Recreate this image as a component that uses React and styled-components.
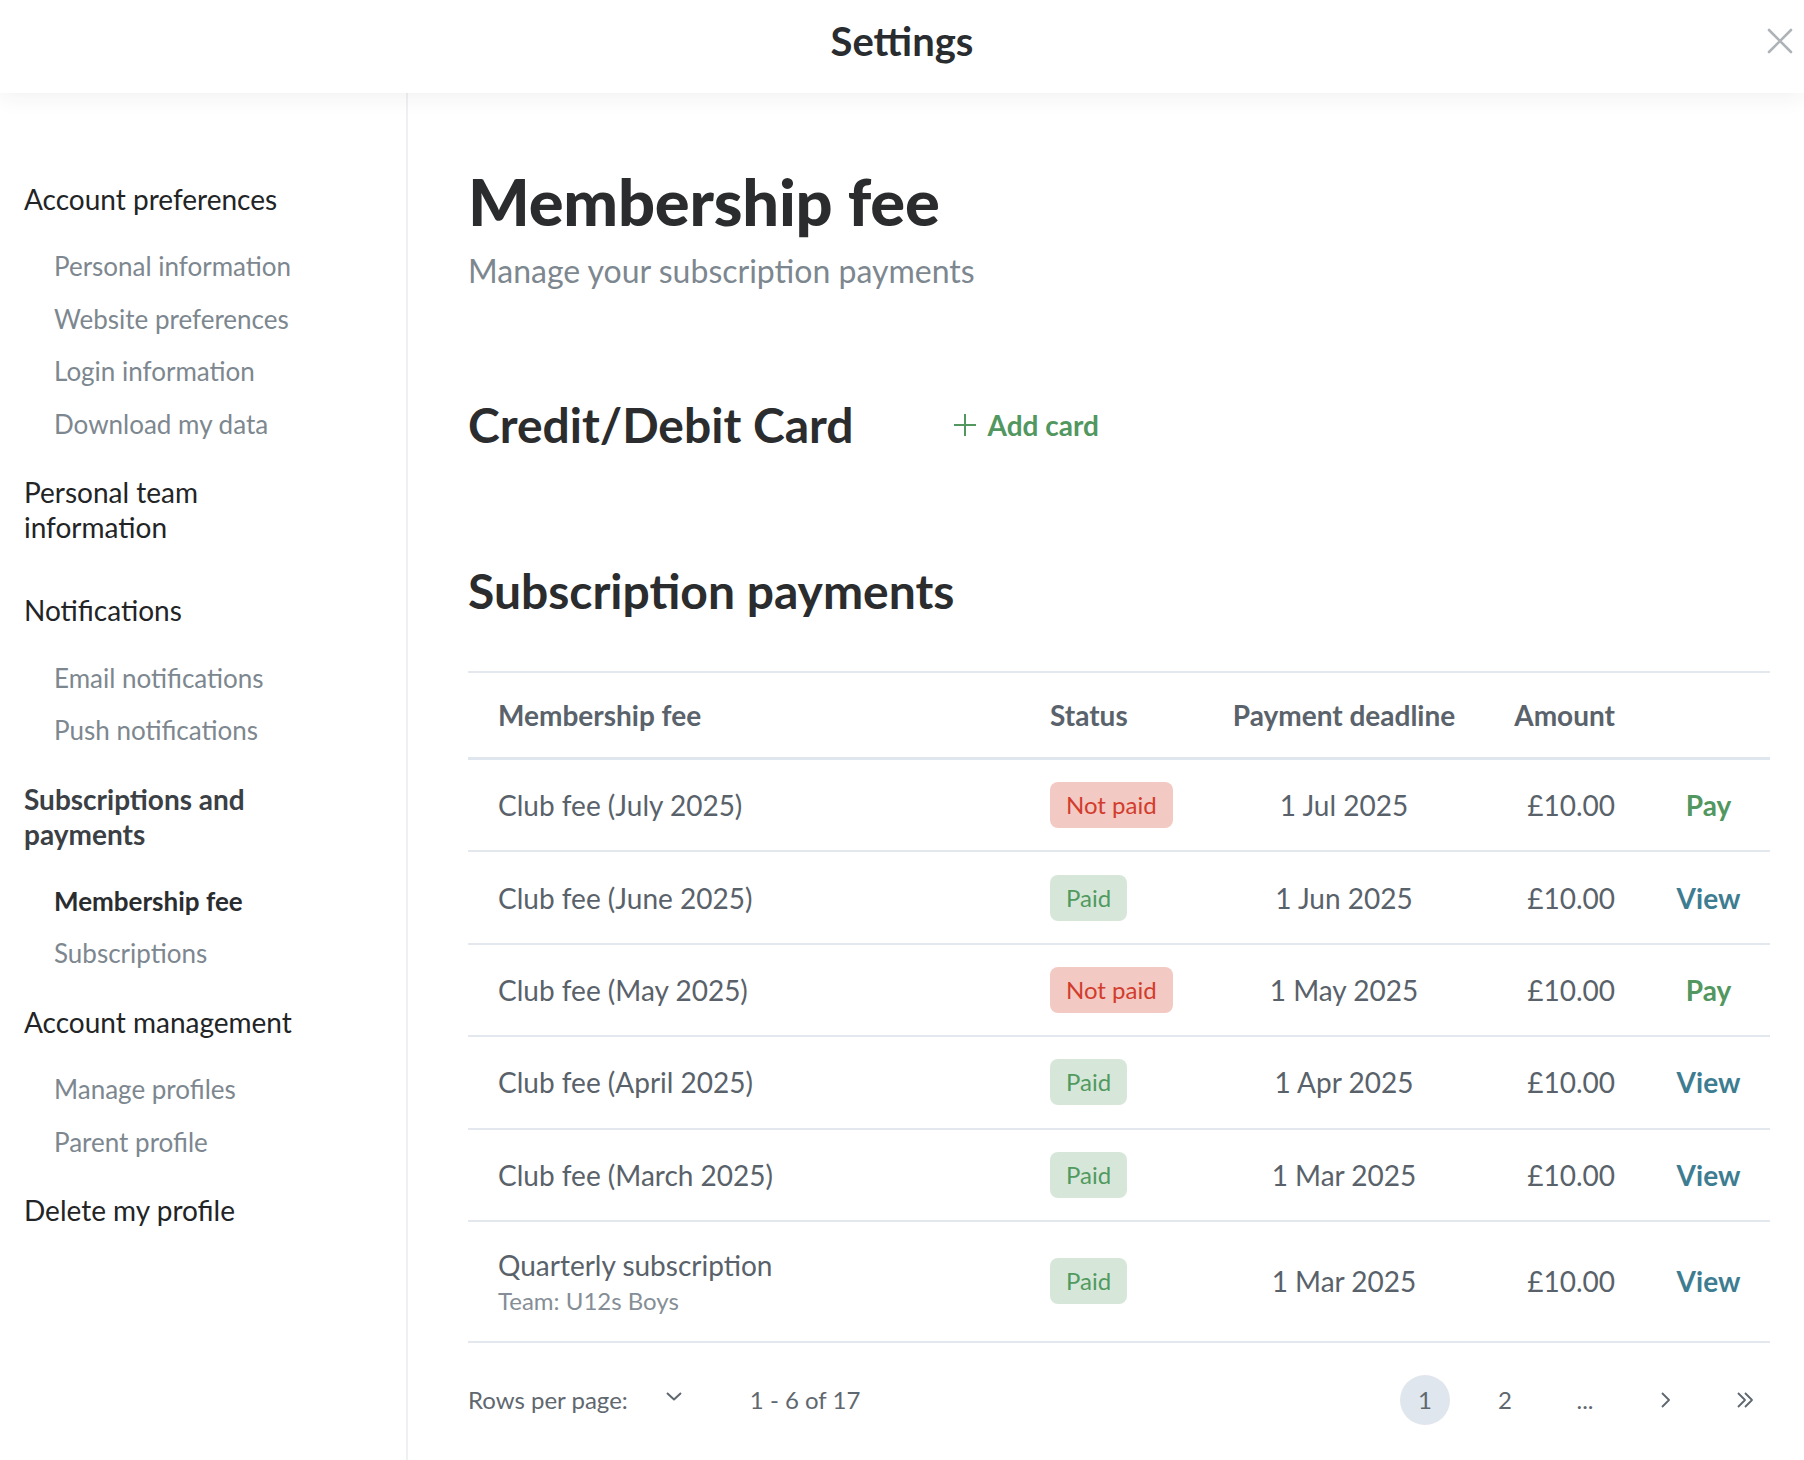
import styled, { createGlobalStyle } from "styled-components";

const GlobalStyle = createGlobalStyle`
    html, body {
        margin: 0;
        padding: 0;
        background: #fff;
    }
    body {
        font-family: 'Lato', 'Noto Sans', sans-serif;
        color: #2a2d30;
    }
    * {
        box-sizing: border-box;
    }
`

const sidebar = [
    {title: "Account preferences", items: [
        {label: "Personal information"},
        {label: "Website preferences"},
        {label: "Login information"},
        {label: "Download my data"},
    ]},
    {title: "Personal team information", items: []},
    {title: "Notifications", items: [
        {label: "Email notifications"},
        {label: "Push notifications"},
    ]},
    {title: "Subscriptions and payments", bold: true, items: [
        {label: "Membership fee", active: true},
        {label: "Subscriptions"},
    ]},
    {title: "Account management", items: [
        {label: "Manage profiles"},
        {label: "Parent profile"},
    ]},
    {title: "Delete my profile", items: []},
]

const payments = [
    {name: "Club fee (July 2025)", paid: false, deadline: "1 Jul 2025", amount: "£10.00"},
    {name: "Club fee (June 2025)", paid: true, deadline: "1 Jun 2025", amount: "£10.00"},
    {name: "Club fee (May 2025)", paid: false, deadline: "1 May 2025", amount: "£10.00"},
    {name: "Club fee (April 2025)", paid: true, deadline: "1 Apr 2025", amount: "£10.00"},
    {name: "Club fee (March 2025)", paid: true, deadline: "1 Mar 2025", amount: "£10.00"},
    {name: "Quarterly subscription", team: "Team: U12s Boys", paid: true, deadline: "1 Mar 2025", amount: "£10.00"},
]

function CloseIcon(){
    return(
        <svg width="26" height="26" viewBox="0 0 26 26" fill="none" stroke="#aeb3b8" strokeWidth="2.6" strokeLinecap="round">
            <path d="M2 2 L24 24 M24 2 L2 24"/>
        </svg>
    )
}

function PlusIcon(){
    return(
        <svg width="22" height="22" viewBox="0 0 22 22" fill="none" stroke="#52975f" strokeWidth="2">
            <path d="M11 0 V22 M0 11 H22"/>
        </svg>
    )
}

function Chevron({dir, double}){
    if (dir === "down") {
        return(
            <svg width="16" height="9" viewBox="0 0 16 9" fill="none" stroke="#5f676f" strokeWidth="2" strokeLinejoin="round">
                <path d="M1 1 L8 7.5 L15 1"/>
            </svg>
        )
    }
    if (double) {
        return(
            <svg width="18" height="18" viewBox="0 0 18 18" fill="none" stroke="#5f676f" strokeWidth="1.8" strokeLinejoin="round">
                <path d="M2 2 L9 9 L2 16 M9 2 L16 9 L9 16"/>
            </svg>
        )
    }
    return(
        <svg width="10" height="18" viewBox="0 0 10 18" fill="none" stroke="#5f676f" strokeWidth="1.8" strokeLinejoin="round">
            <path d="M2 2 L9 9 L2 16"/>
        </svg>
    )
}

export default function App(){
    return(
        <>
            <GlobalStyle/>
            <Page>
                <Header>
                    <HeaderTitle>Settings</HeaderTitle>
                    <CloseButton><CloseIcon/></CloseButton>
                </Header>
                <Body>
                    <Sidebar>
                        {sidebar.map((section) => (
                            <Section key={section.title}>
                                <SectionTitle $bold={section.bold}>{section.title}</SectionTitle>
                                {section.items.length > 0 && (
                                    <SubList>
                                        {section.items.map((item) => (
                                            <SubItem key={item.label} $active={item.active}>{item.label}</SubItem>
                                        ))}
                                    </SubList>
                                )}
                            </Section>
                        ))}
                    </Sidebar>
                    <Main>
                        <PageTitle>Membership fee</PageTitle>
                        <Subtitle>Manage your subscription payments</Subtitle>

                        <CardRow>
                            <SectionHeading>Credit/Debit Card</SectionHeading>
                            <AddCard><PlusIcon/>Add card</AddCard>
                        </CardRow>

                        <SectionHeading $spaced>Subscription payments</SectionHeading>

                        <Table>
                            <HeadRow>
                                <HeadCell>Membership fee</HeadCell>
                                <HeadCell>Status</HeadCell>
                                <HeadCell $align="center">Payment deadline</HeadCell>
                                <HeadCell $align="right">Amount</HeadCell>
                                <HeadCell/>
                            </HeadRow>
                            {payments.map((p, i) => (
                                <Row key={i} $tall={!!p.team}>
                                    <Cell>
                                        <NameBlock>
                                            <span>{p.name}</span>
                                            {p.team && <TeamLabel>{p.team}</TeamLabel>}
                                        </NameBlock>
                                    </Cell>
                                    <Cell>
                                        <Badge $paid={p.paid}>{p.paid ? "Paid" : "Not paid"}</Badge>
                                    </Cell>
                                    <Cell $align="center">{p.deadline}</Cell>
                                    <Cell $align="right">{p.amount}</Cell>
                                    <ActionCell>
                                        <ActionLink $pay={!p.paid}>{p.paid ? "View" : "Pay"}</ActionLink>
                                    </ActionCell>
                                </Row>
                            ))}
                        </Table>

                        <Pagination>
                            <RowsPerPage>
                                Rows per page:
                                <SelectToggle><Chevron dir="down"/></SelectToggle>
                            </RowsPerPage>
                            <RangeText>1 - 6 of 17</RangeText>
                            <Pages>
                                <PageButton $current>1</PageButton>
                                <PageButton>2</PageButton>
                                <PageButton>...</PageButton>
                                <PageButton><Chevron/></PageButton>
                                <PageButton><Chevron double/></PageButton>
                            </Pages>
                        </Pagination>
                    </Main>
                </Body>
            </Page>
        </>
    )
}

const Page = styled.div`
    display: flex;
    flex-direction: column;
    min-height: 1460px;
    background: #fff;
`
const Header = styled.header`
    position: relative;
    z-index: 2;
    display: flex;
    align-items: center;
    justify-content: center;
    height: 93px;
    padding-bottom: 12px;
    background: #fff;
    box-shadow: 0 3px 22px rgba(40, 45, 60, 0.07);
`
const HeaderTitle = styled.h1`
    margin: 0;
    font-family: 'Lato', sans-serif;
    font-weight: 700;
    font-size: 40px;
    color: #2a2d30;
`
const CloseButton = styled.button`
    position: absolute;
    right: 11px;
    top: 28px;
    display: flex;
    padding: 0;
    border: none;
    background: none;
`
const Body = styled.div`
    display: flex;
    flex: 1;
`
const Sidebar = styled.nav`
    width: 408px;
    flex-shrink: 0;
    padding: 89px 0 0 24px;
    border-right: 2px solid #eef0f3;
`
const Section = styled.div`
    display: flex;
    flex-direction: column;
    margin-bottom: 25px;
`
const SectionTitle = styled.div`
    margin-bottom: 23px;
    font-size: 28px;
    line-height: 35px;
    font-weight: ${p => p.$bold ? 700 : 400};
    color: ${p => p.$bold ? "#3b4045" : "#222426"};
    max-width: 300px;
`
const SubList = styled.div`
    display: flex;
    flex-direction: column;
    padding-left: 30px;
`
const SubItem = styled.div`
    height: 52.6px;
    display: flex;
    align-items: center;
    font-size: 26px;
    font-weight: ${p => p.$active ? 700 : 400};
    color: ${p => p.$active ? "#2a2d30" : "#7d878f"};
`
const Main = styled.main`
    flex: 1;
    padding: 70px 34px 0 60px;
`
const PageTitle = styled.h2`
    margin: 0;
    font-size: 65px;
    line-height: 76px;
    font-weight: 900;
    color: #2a2c2e;
    letter-spacing: -0.2px;
`
const Subtitle = styled.p`
    margin: 14px 0 0;
    font-size: 32px;
    line-height: 36px;
    color: #7d878f;
`
const CardRow = styled.div`
    display: flex;
    align-items: center;
    gap: 100px;
    margin-top: 109px;
`
const SectionHeading = styled.h3`
    margin: ${p => p.$spaced ? "112px 0 53px" : "0"};
    font-size: 48px;
    line-height: 54px;
    font-weight: 700;
    color: #2a2c2e;
`
const AddCard = styled.button`
    display: flex;
    align-items: center;
    gap: 12px;
    padding: 0;
    border: none;
    background: none;
    font-family: 'Lato', sans-serif;
    font-size: 28px;
    font-weight: 700;
    color: #52975f;
    cursor: pointer;
`
const Table = styled.div`
    border-top: 2px solid #e3e8ee;
`
const columns = `552px 170px 248px 147px 1fr`
const HeadRow = styled.div`
    display: grid;
    grid-template-columns: ${columns};
    align-items: center;
    height: 87px;
    padding-left: 30px;
    border-bottom: 3px solid #e0e6ed;
`
const HeadCell = styled.div`
    font-size: 28px;
    font-weight: 700;
    color: #5a636b;
    text-align: ${p => p.$align || "left"};
`
const Row = styled.div`
    display: grid;
    grid-template-columns: ${columns};
    align-items: center;
    height: ${p => p.$tall ? "121px" : "92.4px"};
    padding-left: 30px;
    border-bottom: 2px solid #e3e8ee;
`
const Cell = styled.div`
    font-size: 28px;
    color: #59626a;
    text-align: ${p => p.$align || "left"};
`
const NameBlock = styled.div`
    display: flex;
    flex-direction: column;
    gap: 4px;
`
const TeamLabel = styled.span`
    font-size: 24px;
    color: #858e96;
`
const Badge = styled.span`
    display: inline-block;
    height: 46px;
    line-height: 46px;
    padding: 0 16px;
    border-radius: 8px;
    font-size: 24px;
    background: ${p => p.$paid ? "#d6e7d9" : "#f2c9c3"};
    color: ${p => p.$paid ? "#519a5f" : "#d23c2c"};
`
const ActionCell = styled.div`
    padding-left: 32px;
    text-align: center;
`
const ActionLink = styled.a`
    font-size: 28px;
    font-weight: 700;
    color: ${p => p.$pay ? "#52975f" : "#3e7d91"};
    cursor: pointer;
`
const Pagination = styled.div`
    display: flex;
    align-items: center;
    height: 50px;
    margin-top: 32px;
    font-size: 24px;
    color: #5f676f;
`
const RowsPerPage = styled.div`
    display: flex;
    align-items: center;
    gap: 38px;
`
const SelectToggle = styled.span`
    display: flex;
    align-items: center;
    margin-top: -6px;
`
const RangeText = styled.span`
    margin-left: 68px;
`
const Pages = styled.div`
    display: flex;
    align-items: center;
    gap: 30px;
    margin-left: auto;
`
const PageButton = styled.span`
    width: 50px;
    height: 50px;
    border-radius: 50%;
    display: flex;
    align-items: center;
    justify-content: center;
    font-size: 24px;
    color: #5f676f;
    background: ${p => p.$current ? "#e0e6ed" : "transparent"};
`
